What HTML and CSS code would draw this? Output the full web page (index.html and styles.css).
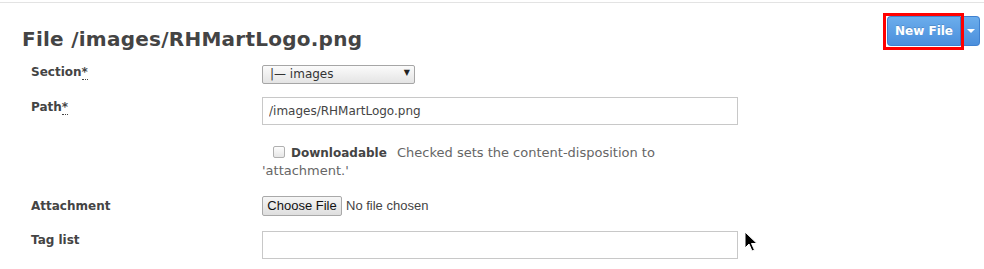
FILE: index.html
```html
<!DOCTYPE html>
<html>
<head>
<meta charset="utf-8">
<link rel="stylesheet" href="styles.css">
</head>
<body>
<div class="topline"></div>
<header class="header">
  <h1 class="title">File /images/RHMartLogo.png</h1>
  <div class="btn-group highlight-wrap">
    <span class="highlight"></span>
    <button class="btn-primary">New File</button>
    <button class="btn-caret"><span class="caret"></span></button>
  </div>
</header>
<form class="form">
  <div class="row row-section">
    <label class="label">Section<abbr class="req">*</abbr></label>
    <div class="field">
      <span class="select-wrap"><select class="select"><option>|— images</option></select></span>
    </div>
  </div>
  <div class="row row-path">
    <label class="label label-pad">Path<abbr class="req">*</abbr></label>
    <div class="field">
      <input class="text-input" type="text" value="/images/RHMartLogo.png">
    </div>
  </div>
  <div class="row row-check">
    <div></div>
    <div class="field check-field">
      <input class="checkbox" type="checkbox"><b class="check-label">Downloadable</b> <span class="help">Checked sets the content-disposition to 'attachment.'</span>
    </div>
  </div>
  <div class="row row-attach">
    <label class="label">Attachment</label>
    <div class="field file-field">
      <button type="button" class="file-btn">Choose File</button><span class="file-name">No file chosen</span>
    </div>
  </div>
  <div class="row row-tags">
    <label class="label">Tag list</label>
    <div class="field">
      <input class="text-input" type="text" value="">
      <svg class="cursor" width="14" height="22" viewBox="0 0 14 22"><path d="M1 1 L1 17 L5 13 L8 20 L10.5 19 L7.5 12.5 L13 12.5 Z" fill="#000" stroke="#fff" stroke-width="1"/></svg>
    </div>
  </div>
</form>
</body>
</html>
```
FILE: styles.css
```css
html, body {
  margin: 0;
  padding: 0;
  background: #fff;
}
body {
  font-family: "DejaVu Sans", Verdana, sans-serif;
  color: #444;
  width: 984px;
  height: 269px;
  overflow: hidden;
}
.topline {
  margin-top: 2px;
  height: 1px;
  background: #e3e3e3;
}
.header {
  display: flex;
  justify-content: space-between;
  align-items: flex-start;
  padding: 0 4px 0 22px;
  height: 57px;
}
.title {
  margin: 24px 0 0 0;
  font-size: 20px;
  line-height: 24px;
  font-weight: bold;
  letter-spacing: 0.25px;
  color: #444;
}
.btn-group {
  display: flex;
  margin-top: 13px;
  position: relative;
}
.highlight {
  position: absolute;
  left: -4px;
  top: -3px;
  width: 75px;
  height: 31px;
  border: 3px solid #f00;
  pointer-events: none;
  z-index: 2;
}
.btn-primary, .btn-caret {
  border: 1px solid #3f81d0;
  background: linear-gradient(#6badec, #4b8fdc);
  color: #fff;
  font-family: "DejaVu Sans", Verdana, sans-serif;
  font-weight: bold;
  font-size: 12px;
  height: 30px;
  margin: 0;
  padding: 0;
  text-shadow: 0 -1px 0 rgba(0,0,0,0.15);
}
.btn-primary {
  width: 74px;
  border-radius: 4px 0 0 4px;
  border-right-color: #3a77c0;
}
.btn-caret {
  width: 19px;
  border-radius: 0 4px 4px 0;
  border-left: 1px solid #82b6ea;
  display: flex;
  align-items: center;
  justify-content: center;
}
.caret {
  width: 0;
  height: 0;
  border-left: 4px solid transparent;
  border-right: 4px solid transparent;
  border-top: 4px solid #fff;
}
.form {
  margin: 0;
  padding-left: 31px;
}
.row {
  display: grid;
  grid-template-columns: 231px 476px;
}
.label {
  font-size: 12px;
  font-weight: bold;
  line-height: 18px;
  color: #444;
}
.label-pad {
  padding-top: 1px;
}
.req {
  text-decoration: none;
  border-bottom: 1px dotted #444;
  cursor: help;
}
.row-section {
  margin-top: 3px;
}
.select-wrap {
  position: relative;
  display: inline-block;
}
.select {
  appearance: none;
  -webkit-appearance: none;
  width: 153px;
  height: 19px;
  border: 1px solid #a6a6a6;
  border-radius: 2px;
  background: linear-gradient(#fbfbfb, #e4e4e4);
  font-family: "DejaVu Sans", Verdana, sans-serif;
  font-size: 12px;
  color: #333;
  padding: 0 0 0 7px;
  margin: 0;
  display: block;
}
.select-wrap::after {
  content: "▼";
  position: absolute;
  right: 5px;
  top: 3px;
  font-size: 8px;
  color: #222;
  pointer-events: none;
}
.row-path {
  margin-top: 13px;
}
.text-input {
  box-sizing: border-box;
  width: 476px;
  height: 28px;
  border: 1px solid #c8c8c8;
  padding: 0 6px;
  margin: 0;
  font-family: "DejaVu Sans", Verdana, sans-serif;
  font-size: 12px;
  color: #444;
  display: block;
}
.row-check {
  margin-top: 19px;
}
.check-field {
  font-size: 13px;
  line-height: 17px;
  color: #666;
  width: 430px;
}
.checkbox {
  appearance: none;
  -webkit-appearance: none;
  box-sizing: border-box;
  width: 12px;
  height: 12px;
  margin: 0 6px 0 11px;
  vertical-align: -1px;
  border: 1px solid #b0b0b0;
  border-radius: 2px;
  background: linear-gradient(#fdfdfd, #e6e6e6);
}
.check-label {
  font-size: 12px;
  color: #444;
  margin-right: 6px;
}
.row-attach {
  margin-top: 17px;
  align-items: center;
}
.row-attach .label {
  padding-top: 1px;
}
.file-field {
  display: flex;
  align-items: center;
  font-family: "Liberation Sans", Arial, sans-serif;
  font-size: 13px;
}
.file-btn {
  font-family: "Liberation Sans", Arial, sans-serif;
  font-size: 13px;
  height: 20px;
  width: 80px;
  padding: 0;
  margin: 0 4px 0 0;
  border: 1px solid #a9a9a9;
  border-radius: 2px;
  background: linear-gradient(#f6f6f6, #dedede);
  color: #111;
}
.file-name {
  color: #444;
}
.row-tags {
  margin-top: 15px;
}
.row-tags .field {
  position: relative;
}
.cursor {
  position: absolute;
  left: 482px;
  top: 0px;
}
```
